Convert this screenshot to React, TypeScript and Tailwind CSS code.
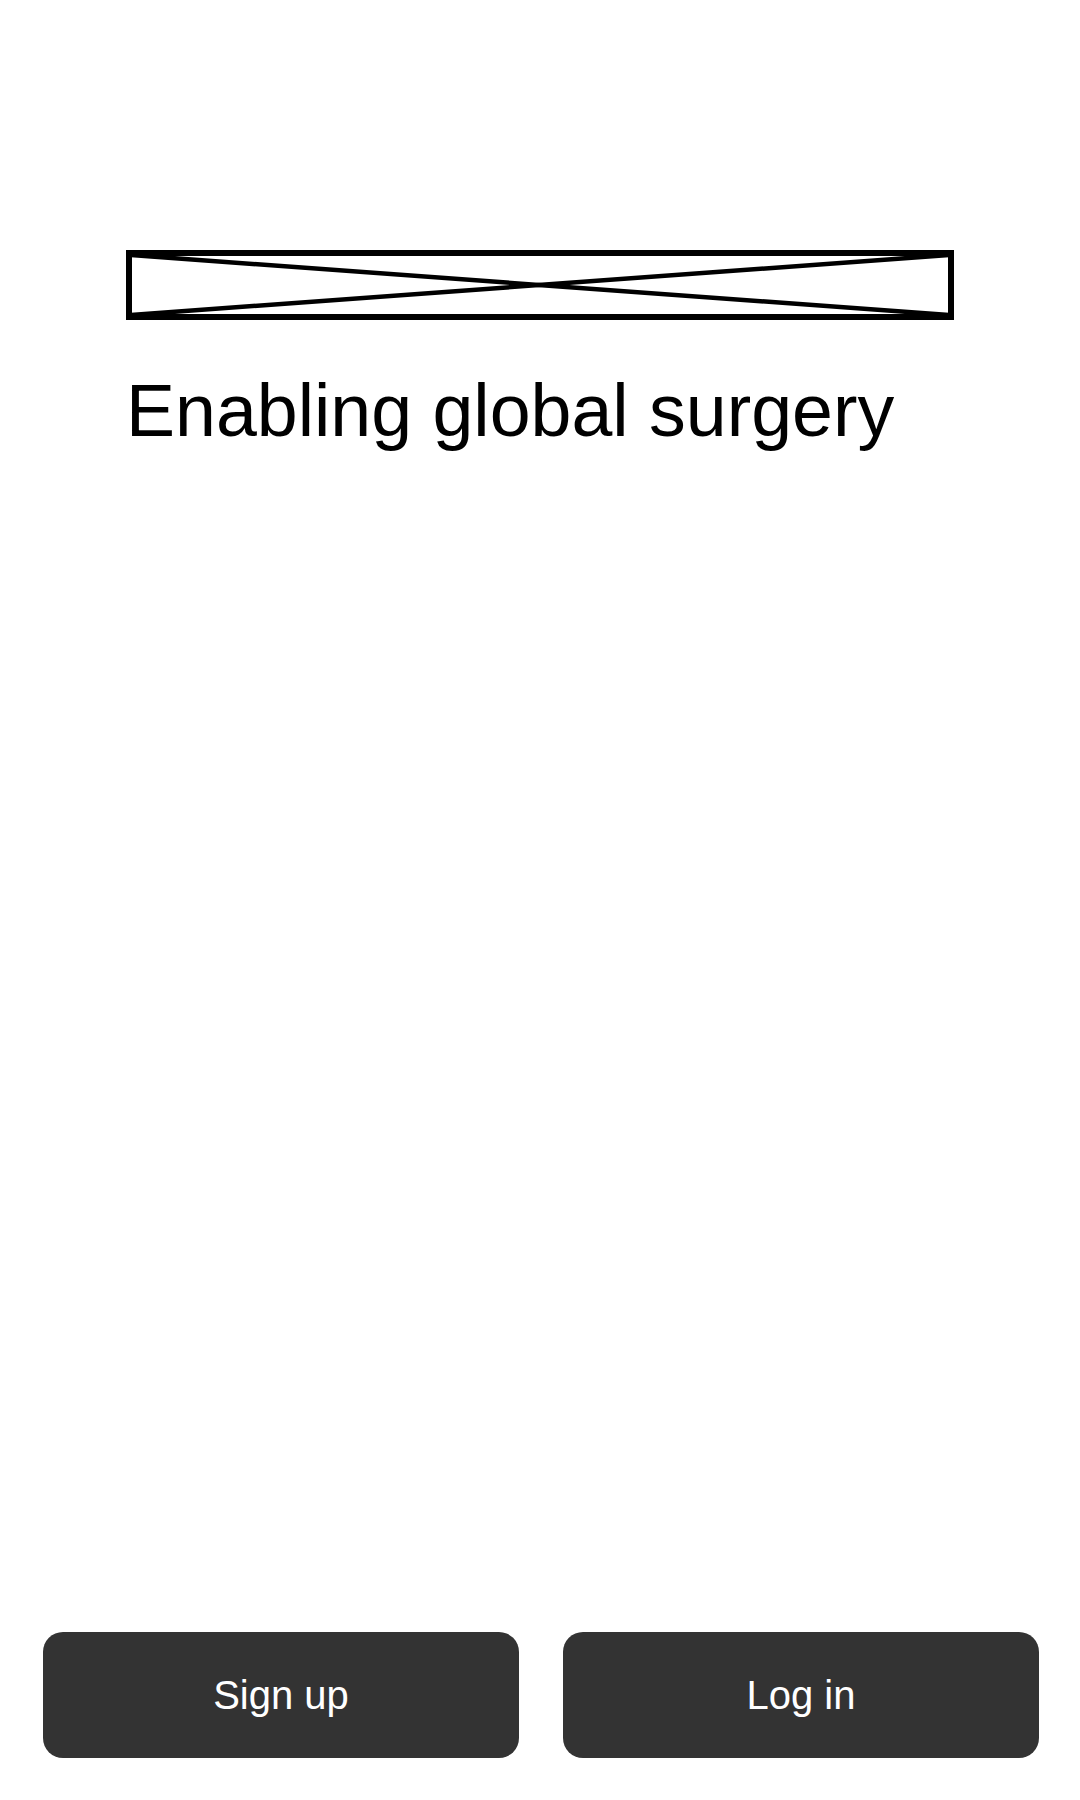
import React from 'react';

const ImagePlaceholder: React.FC = () => (
  <svg className="block w-full h-[70px]" viewBox="0 0 828 70" preserveAspectRatio="none">
    <rect x="3" y="3" width="822" height="64" fill="none" stroke="#000" strokeWidth="6" />
    <line x1="5" y1="5" x2="823" y2="65" stroke="#000" strokeWidth="4.5" />
    <line x1="5" y1="65" x2="823" y2="5" stroke="#000" strokeWidth="4.5" />
  </svg>
);

export default function App() {
  return (
    <div
      className="flex flex-col h-[1800px] w-full bg-white"
      style={{ fontFamily: '"Liberation Sans", Arial, sans-serif' }}
    >
      {/* Header block */}
      <div className="pt-[250px] pl-[126px] pr-[126px]">
        <ImagePlaceholder />
        <h1 className="mt-[49px] text-[73.5px] font-normal leading-[84px] text-black">
          Enabling global surgery
        </h1>
      </div>

      <div className="flex-1" />

      {/* Actions */}
      <div className="flex gap-[44px] pl-[43px] pr-[41px] pb-[42px]">
        <button className="flex-1 h-[126px] rounded-[20px] bg-[#333333] text-white text-[40px]">
          Sign up
        </button>
        <button className="flex-1 h-[126px] rounded-[20px] bg-[#333333] text-white text-[40px]">
          Log in
        </button>
      </div>
    </div>
  );
}
